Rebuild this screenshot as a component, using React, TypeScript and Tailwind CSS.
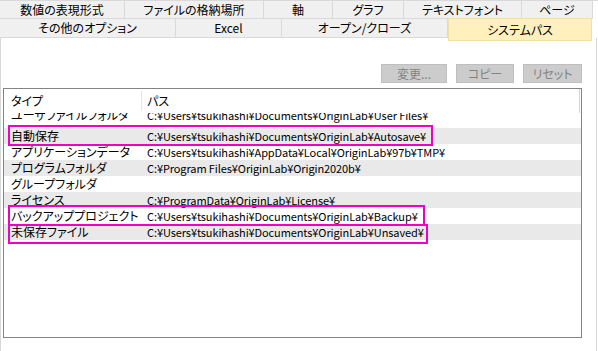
const font = {
  fontFamily: '"Noto Sans CJK JP", "Liberation Sans", sans-serif',
  fontFeatureSettings: '"palt"',
};

const topTabs = [
  { label: '数値の表現形式', w: 'w-[125px]' },
  { label: 'ファイルの格納場所', w: 'w-[139px]' },
  { label: '軸', w: 'w-[69px]' },
  { label: 'グラフ', w: 'w-[71px]' },
  { label: 'テキストフォント', w: 'w-[118px]' },
  { label: 'ページ', w: 'w-[71px]' },
];

const bottomTabs = [
  { label: 'その他のオプション', w: 'w-[176px]' },
  { label: 'Excel', w: 'w-[106px]' },
  { label: 'オープン/クローズ', w: 'w-[166px]' },
];

const rows = [
  { type: 'ユーザファイルフォルダ', path: 'C:¥Users¥tsukihashi¥Documents¥OriginLab¥User Files¥' },
  { type: '自動保存', path: 'C:¥Users¥tsukihashi¥Documents¥OriginLab¥Autosave¥' },
  { type: 'アプリケーションデータ', path: 'C:¥Users¥tsukihashi¥AppData¥Local¥OriginLab¥97b¥TMP¥' },
  { type: 'プログラムフォルダ', path: 'C:¥Program Files¥OriginLab¥Origin2020b¥' },
  { type: 'グループフォルダ', path: '' },
  { type: 'ライセンス', path: 'C:¥ProgramData¥OriginLab¥License¥' },
  { type: 'バックアッププロジェクト', path: 'C:¥Users¥tsukihashi¥Documents¥OriginLab¥Backup¥' },
  { type: '未保存ファイル', path: 'C:¥Users¥tsukihashi¥Documents¥OriginLab¥Unsaved¥' },
];

function Tab({ label, w }: { label: string; w: string }) {
  return (
    <div
      className={`${w} flex h-full items-center justify-center border-r border-b border-[#d9d9d9] bg-[#f0f0f0] text-[12px] text-black`}
    >
      {label}
    </div>
  );
}

function DisabledButton({ label, w }: { label: string; w: string }) {
  return (
    <div
      className={`${w} flex h-[19px] items-center justify-center border border-[#bfbfbf] bg-[#cccccc] text-[12px] text-[#838383]`}
    >
      {label}
    </div>
  );
}

export default function App() {
  return (
    <div className="relative h-[351px] w-[598px] overflow-hidden bg-white" style={font}>
      {/* tabs */}
      <div className="flex h-[19px] border-t border-[#d9d9d9]">
        {topTabs.map(t => (
          <Tab key={t.label} {...t} />
        ))}
      </div>
      <div className="flex h-[19px]">
        {bottomTabs.map(t => (
          <Tab key={t.label} {...t} />
        ))}
        <div className="relative z-10 -mt-[1px] flex h-[23px] w-[144px] items-center justify-center border border-[#f2dfa5] bg-[#fff0bd] text-[12px] text-black">
          システムパス
        </div>
      </div>

      {/* page */}
      <div className="h-[313px] w-[597px] border-x border-[#d8d8d8]">
        <div className="flex justify-end gap-[9px] pt-[26px] pr-[14px]">
          <DisabledButton label="変更..." w="w-[66px]" />
          <DisabledButton label="コピー" w="w-[58px]" />
          <DisabledButton label="リセット" w="w-[59px]" />
        </div>

        <div className="relative mt-[5px] ml-[2px] h-[250px] w-[579px] overflow-hidden border border-[#848484] text-[12px] text-black">
          <div className="flex h-[24px] items-center">
            <div className="w-[138px] border-r border-[#e4e4e4] pl-[7px] leading-[20px]">タイプ</div>
            <div className="pl-[5px]">パス</div>
          </div>
          <div className="absolute top-0 right-[1px] h-[24px] w-[1px] bg-[#d4d4d4]" />

          {rows.map((r, i) => (
            <div
              key={r.type}
              className={`flex overflow-hidden ${i === 0 ? 'h-[15px]' : 'h-[16px]'} ${i % 2 === 1 ? 'bg-[#e9e9e9]' : ''}`}
            >
              <div
                className={`w-[139px] shrink-0 whitespace-nowrap pl-[7px] leading-[16px] ${i === 0 ? '-mt-[6px]' : ''}`}
              >
                {r.type}
              </div>
              <div
                className={`whitespace-nowrap pl-[4px] text-[11px] leading-[16px] tracking-[-0.1px] ${i === 0 ? '-mt-[6px]' : ''}`}
              >
                {r.path}
              </div>
            </div>
          ))}
        </div>
      </div>

      {/* highlight frames */}
      <div className="absolute top-[125px] left-[8px] h-[21px] w-[425px] border-2 border-[#f000c0]" />
      <div className="absolute top-[205px] left-[8px] h-[21px] w-[417px] border-2 border-[#f000c0]" />
      <div className="absolute top-[224px] left-[8px] h-[20px] w-[420px] border-2 border-[#f000c0]" />
    </div>
  );
}
